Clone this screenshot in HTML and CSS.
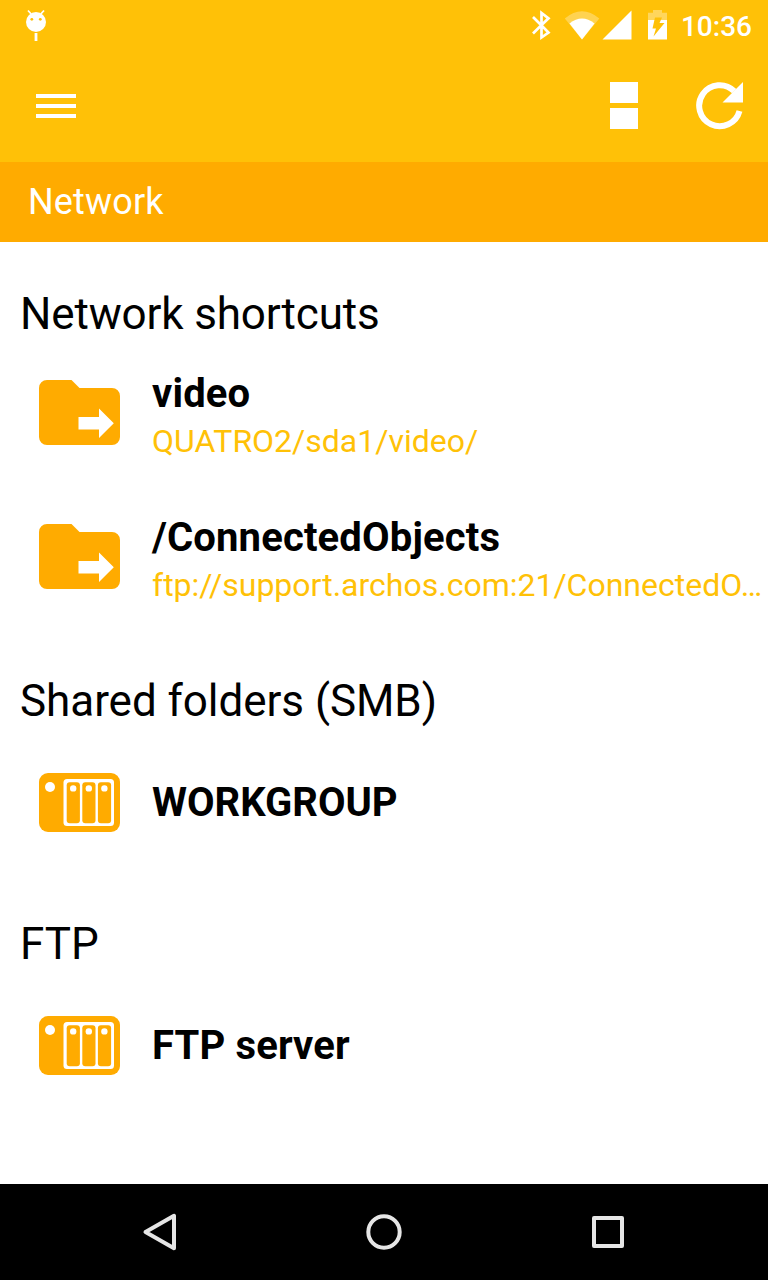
FILE: index.html
```html
<!DOCTYPE html>
<html lang="en">
<head>
<meta charset="utf-8">
<title>Network</title>
<link rel="stylesheet" href="styles.css">
</head>
<body>
<svg class="defs" width="0" height="0">
  <symbol id="folder" viewBox="0 0 81 65">
    <path fill="#ffab00" d="M8 0H32.500L40.500 8H73A8 8 0 0 1 81 16V57A8 8 0 0 1 73 65H8A8 8 0 0 1 0 57V8A8 8 0 0 1 8 0Z"/>
    <path fill="#fff" d="M39.500 37H60V28.500L74.800 43.300L60 58V49.500H39.500Z"/>
  </symbol>
  <symbol id="server" viewBox="0 0 81 59">
    <rect width="81" height="59" rx="9" fill="#ffab00"/>
    <circle cx="11" cy="14" r="5" fill="#fff"/>
    <rect x="24.500" y="6" width="50.500" height="47" rx="3.500" fill="#fff"/>
    <g fill="#ffab00">
      <rect x="27.700" y="9.200" width="13.200" height="41" rx="3"/>
      <rect x="43.300" y="9.200" width="13.200" height="41" rx="3"/>
      <rect x="58.900" y="9.200" width="13.200" height="41" rx="3"/>
    </g>
    <g fill="#fff">
      <circle cx="34.200" cy="15.400" r="3.200"/>
      <circle cx="49.800" cy="15.400" r="3.200"/>
      <circle cx="65.400" cy="15.400" r="3.200"/>
    </g>
  </symbol>
</svg>
<div class="screen">
  <div class="status-bar">
    <svg class="debug" width="20" height="32" viewBox="0 0 20 32">
      <circle cx="10" cy="13" r="10" fill="#fff"/>
      <path d="M2 1.500L5.200 5M18 1.500L14.800 5" stroke="#fff" stroke-width="1.800"/>
      <path d="M10 24V32" stroke="#fff" stroke-width="2.800"/>
      <circle cx="5.800" cy="10.300" r="1.400" fill="#ffc107"/>
      <circle cx="14.300" cy="10.300" r="1.400" fill="#ffc107"/>
    </svg>
    <svg class="indicators" width="138" height="32" viewBox="530 9 138 32">
      <path d="M533 17L541.300 25.200L548.500 32.500L541.500 37.500V13L548.500 18.300L541.300 25.200L533 33.500" fill="none" stroke="#fff" stroke-width="2.700"/>
      <path fill="#fff" opacity=".3" d="M564.800 18.500Q582 4 599.300 18.500L582 39.500Z"/>
      <path fill="#fff" d="M569.500 23.500Q582 13.500 594.500 23.500L582 39.500Z"/>
      <path fill="#fff" d="M631.500 10.500V39.500H602.500Z"/>
      <path fill="#fff" opacity=".35" d="M648 20V12.800H653V10H662V12.800H667V20Z"/>
      <path fill="#fff" d="M648 20H667V39.500H648Z"/>
      <path fill="#ffc107" d="M655 17.500H662L659.500 23H664.500L653.500 36.500L656 28.500H652.500Z"/>
    </svg>
    <span class="clock">10:36</span>
  </div>
  <div class="toolbar">
    <svg width="40" height="24"><path fill="#fff" d="M0 0h40v4H0zM0 10h40v4H0zM0 20h40v4H0z"/></svg>
    <svg class="view" width="28" height="48"><path fill="#fff" d="M0 0h28v21H0zM0 26h28v21H0z"/></svg>
    <svg class="refresh" width="48" height="48" viewBox="0 0 48 48">
      <path d="M43.500 29A20.500 20.500 0 1 1 38.200 9.200" fill="none" stroke="#fff" stroke-width="6"/>
      <path fill="#fff" d="M47 0V20.500H26.500Z"/>
    </svg>
  </div>
  <div class="path-bar">Network</div>
  <main class="content">
    <h2 class="heading first">Network shortcuts</h2>
    <div class="row">
      <svg class="icon folder"><use href="#folder"/></svg>
      <div class="text"><div class="title">video</div><div class="sub">QUATRO2/sda1/video/</div></div>
    </div>
    <div class="row">
      <svg class="icon folder"><use href="#folder"/></svg>
      <div class="text"><div class="title wide">/ConnectedObjects</div><div class="sub">ftp://support.archos.com:21/ConnectedO…</div></div>
    </div>
    <h2 class="heading second">Shared folders (SMB)</h2>
    <div class="row">
      <svg class="icon server"><use href="#server"/></svg>
      <div class="text single"><div class="title caps">WORKGROUP</div></div>
    </div>
    <h2 class="heading third">FTP</h2>
    <div class="row">
      <svg class="icon server"><use href="#server"/></svg>
      <div class="text single"><div class="title">FTP server</div></div>
    </div>
  </main>
  <div class="nav-bar">
    <svg width="40" height="40" viewBox="0 0 40 40"><path d="M5.500 20L34 3.800V36.200Z"/></svg>
    <svg width="40" height="40" viewBox="0 0 40 40"><circle cx="20" cy="20" r="15.700"/></svg>
    <svg width="40" height="40" viewBox="0 0 40 40"><rect x="6" y="6" width="28" height="28"/></svg>
  </div>
</div>
</body>
</html>
```
FILE: styles.css
```css
* { box-sizing: border-box; }
body { margin: 0; font-family: Roboto, "Noto Sans", sans-serif; background: #fff; color: #000; }
svg { display: block; flex: none; }
.defs { position: absolute; }
.screen { width: 768px; height: 1280px; display: flex; flex-direction: column; overflow: hidden; }
.status-bar { height: 50px; flex: none; background: #ffc107; display: flex; align-items: flex-start; padding: 9px 16px 0 26px; }
.indicators { margin-left: auto; }
.clock { color: #fff; font-size: 28px; font-weight: 500; line-height: 36px; margin-left: 13px; }
.toolbar { height: 112px; flex: none; background: #ffc107; display: flex; align-items: center; padding: 0 24px 0 36px; }
.view { margin-left: auto; }
.refresh { margin-left: 58px; }
.path-bar { height: 80px; flex: none; background: #ffab00; color: #fff; font-size: 36px; line-height: 80px; padding-left: 28px; letter-spacing: 0.15px; }
.content { flex: 1; min-height: 0; }
.heading { margin: 0; padding-left: 20px; font-size: 44px; font-weight: 400; line-height: 52px; letter-spacing: -0.05px; }
.first { padding-top: 46px; letter-spacing: -0.15px; }
.second { padding-top: 47px; padding-bottom: 3px; }
.third { padding-top: 44px; padding-bottom: 3px; }
.row { display: flex; align-items: flex-start; height: 144px; padding: 0 0 0 39px; }
.icon { width: 81px; margin-right: 32px; }
.folder { height: 65px; margin-top: 40px; }
.server { height: 59px; margin-top: 43px; }
.text { flex: 1; min-width: 0; padding-top: 30px; }
.single { padding-top: 49px; }
.title { font-size: 40px; font-weight: 700; line-height: 48px; letter-spacing: 0.15px; }
.caps { letter-spacing: 0; }
.sub { margin-top: -1px; font-size: 32px; line-height: 48px; color: #ffc107; white-space: nowrap; }
.nav-bar { height: 96px; flex: none; background: #000; display: flex; justify-content: space-between; align-items: center; padding: 0 140px; }
.nav-bar svg { fill: none; stroke: #e6e6e6; stroke-width: 4; stroke-linejoin: round; }
```
